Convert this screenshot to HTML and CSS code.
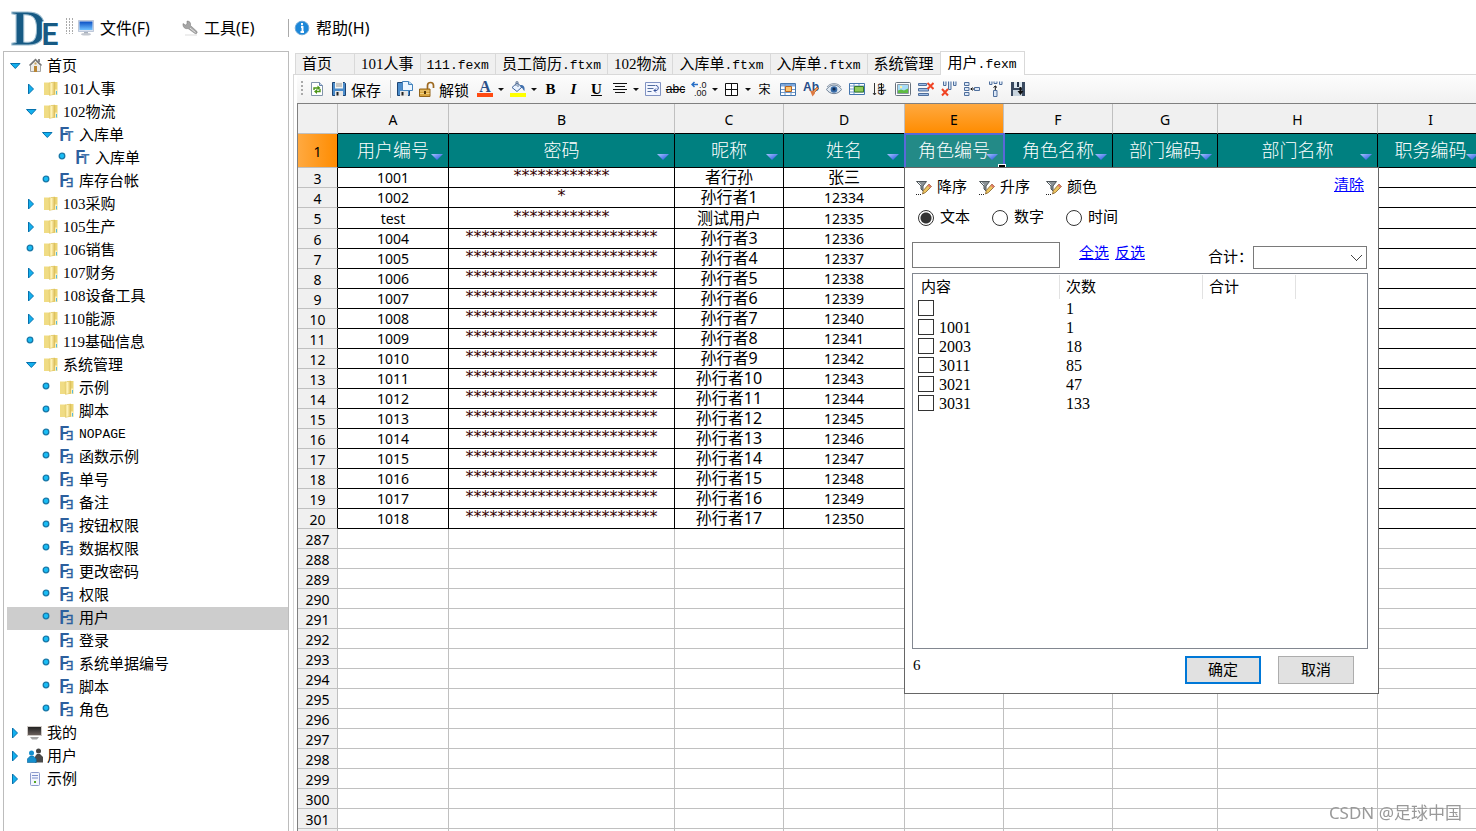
FILE: index.html
```html
<!DOCTYPE html>
<html lang="zh-CN">
<head>
<meta charset="utf-8">
<title>用户.fexm</title>
<link rel="stylesheet" href="styles.css">
</head>
<body>
<svg class="defs" aria-hidden="true">
  <defs>
    <linearGradient id="gold" x1="0" x2="1" y1="0" y2="0"><stop offset="0" stop-color="#ecd575"/><stop offset=".4" stop-color="#fff3b8"/><stop offset="1" stop-color="#d9b94f"/></linearGradient>
    <linearGradient id="blue" x1="0" x2="0" y1="0" y2="1"><stop offset="0" stop-color="#0a4fc4"/><stop offset="1" stop-color="#6fc0ff"/></linearGradient>
    <linearGradient id="flag" x1="0" x2="1" y1="0" y2="1"><stop offset="0" stop-color="#a8c4ff"/><stop offset="1" stop-color="#1c50dc"/></linearGradient>
    <linearGradient id="dark" x1="0" x2="0" y1="0" y2="1"><stop offset="0" stop-color="#222"/><stop offset="1" stop-color="#6a605c"/></linearGradient>
  </defs>
  <symbol id="open" viewBox="0 0 16 16"><path d="M3.500 5.500h9.500L8.300 10.500z" fill="#12b0ee" stroke="#0672ae"/></symbol>
  <symbol id="closed" viewBox="0 0 16 16"><path d="M5.500 3v10l5-5z" fill="#12b0ee" stroke="#0672ae"/></symbol>
  <symbol id="leaf" viewBox="0 0 16 16"><circle cx="7" cy="6" r="2.800" fill="#19bdf5" stroke="#1878a8" stroke-width="1.300"/></symbol>
  <symbol id="home" viewBox="0 0 16 16"><path d="M3.500 7.500v6h10v-6l-5-5z" fill="#ececea" stroke="#a5a5a3"/><path d="M2.500 7.500l6-6 6 6" fill="none" stroke="#777" stroke-width="1.500"/><path d="M11 1h2v3h-2z" fill="#888"/><path d="M7 8h3v6H7z" fill="#b98532"/><path d="M7.500 4.500h2v2h-2z" fill="#caa45c"/></symbol>
  <symbol id="folder" viewBox="0 0 16 16"><path d="M8 1h6.500v13H7z" fill="#ecd675"/><path d="M1 1.500h6V14H1z" fill="#f0dc84"/><path d="M6 2l6-1v12l-5.500 1.500z" fill="url(#gold)" stroke="#dcc260" stroke-width=".5"/><path d="M12 8.500h3V14h-3z" fill="#f9efbd"/><path d="M13.500 10v3.500" stroke="#58b8dc"/></symbol>
  <symbol id="ft" viewBox="0 0 16 16"><text x="0" y="14" font-family="Lato" font-size="18" font-weight="700" fill="#2c5f9e">F</text><text x="6" y="14" font-family="Lato" font-size="14" font-weight="700" fill="#4374ac">T</text></symbol>
  <symbol id="f3" viewBox="0 0 16 16"><text x="0" y="14" font-family="Lato" font-size="18" font-weight="700" fill="#2c5f9e">F</text><text x="7" y="14" font-family="DejaVu Sans" font-size="12" font-weight="400" fill="#2c5f9e" stroke="#2c5f9e" stroke-width=".4">Ǝ</text></symbol>
  <symbol id="tv" viewBox="0 0 16 16"><path d="M0 1h15v10H0z" fill="#cfcac6"/><path d="M1 2h13v8H1z" fill="url(#dark)"/><path d="M3 12h9l-2 2.500H5z" fill="#a5a5a5"/></symbol>
  <symbol id="people" viewBox="0 0 16 16"><circle cx="11.500" cy="3" r="2.500" fill="#444"/><path d="M8 14.500V8.500L10 6h3l3 3v5.500z" fill="#4a4a4a"/><circle cx="4.500" cy="5" r="2.500" fill="#148fce"/><path d="M.300 14.500V11l3-3h3l3 3v3.500z" fill="#148fce" stroke="#0a5f94" stroke-width=".6"/></symbol>
  <symbol id="sheet" viewBox="0 0 16 16"><rect x="3.500" y="1.500" width="9" height="13" rx="1" fill="#f2f5fd" stroke="#8d9ccc"/><path d="M5 4.500h6M5 7h6" stroke="#7b8fca"/><path d="M7 10h2v2H7z" fill="#52a522"/></symbol>
  <symbol id="monitor" viewBox="0 0 16 16"><path d="M.500.500h15v11H.500z" fill="#dbe3ef" stroke="#a9b6cc" stroke-width=".7"/><path d="M1.500 1.500h13v8.500h-13z" fill="url(#blue)"/><path d="M6 12h4v2H6z" fill="#a9b1bd"/><ellipse cx="8" cy="14.300" rx="5" ry="1.200" fill="#c3c8d0"/></symbol>
  <symbol id="wrench" viewBox="0 0 16 16"><path d="M1 3.500L3.500 5 5 4V1c3 0 4 2 3.500 4.500L15 11.500c.8 2-1.200 2.500-2 2L6 8.500C3 9.500.500 7 1 3.500z" fill="#a5a5a5" stroke="#777" stroke-width=".5"/><path d="M8 8l5.500 4.500" stroke="#e5e5e5"/><path d="M3 15h12" stroke="#ddd"/></symbol>
  <symbol id="info" viewBox="0 0 16 16"><circle cx="8" cy="8" r="6.800" fill="#1c87d8" stroke="#6aa7d8"/><path d="M8 3v2.200M7 7h1.500v4.500M6.500 12H10" stroke="#fff" stroke-width="1.900" fill="none"/></symbol>
  <symbol id="refresh" viewBox="0 0 16 16"><path d="M2.500 1.500h8l3 3v10h-11z" fill="#fff" stroke="#8294ab"/><path d="M10.500 1.500v3h3" fill="#c6d5ea" stroke="#6782ab"/><path d="M5 9V7h4.500M11 8v2.500H7" fill="none" stroke="#4b9617" stroke-width="1.400"/><path d="M8.500 4.500l3 2.500-3 2.200M8 8L5 10.500 8 13z" fill="#4b9617"/></symbol>
  <symbol id="save" viewBox="0 0 16 16"><path d="M1.500 1.500h12l1 1v12h-13z" fill="#4b8ccb" stroke="#1d4574"/><path d="M4 1h8v6.500H4z" fill="#f4f4f0"/><path d="M5 3h6M5 5h6" stroke="#999"/><path d="M4 10h8v5H4z" fill="#e6e6e6"/><path d="M5.500 11h2v3.500h-2z" fill="#222"/></symbol>
  <symbol id="saveas" viewBox="0 0 16 16"><path d="M.500 1.500h12v13H.500z" fill="#4b8ccb" stroke="#1d4574"/><path d="M3 10h8v5H3z" fill="#e6e6e6"/><path d="M4.500 11h2v3.500h-2z" fill="#222"/><path d="M5.500.500h6l4 3v6h-10z" fill="#edf6ff" stroke="#4382bb"/><path d="M11.500.500v3h4" fill="#b4d7f4" stroke="#4382bb"/></symbol>
  <symbol id="lock" viewBox="0 0 16 16"><path d="M8.500 8V4.500c0-4 6-4 6 0V7" fill="none" stroke="#9d681f" stroke-width="1.700"/><path d="M.500 8h10.500v7.500H.500z" fill="#d9a640" stroke="#94651b"/><path d="M1 10h9.500M1 12.500h9.500" stroke="#f3d385"/><path d="M5 10h2v3H5z" fill="#553807"/></symbol>
  <symbol id="fill" viewBox="0 0 16 16"><path d="M2 6.500L7 2l5 4-5 4.500z" fill="#eaf3ff" stroke="#42669b"/><path d="M6 5V.800h2V6" fill="none" stroke="#647a98"/><path d="M10 4c4-.5 5 2 4.500 6-2-1-1-3-4-4z" fill="#4271ae"/><path d="M0 12h16v4H0z" fill="#ff0"/></symbol>
  <symbol id="align" viewBox="0 0 16 16"><path d="M1 2.500h14M3 5.500h10M1 8.500h14M3 11.500h10" stroke="#111"/></symbol>
  <symbol id="wrap" viewBox="0 0 16 16"><path d="M.500 1.500h15v13H.500z" fill="#f3f6ff" stroke="#8193c2"/><path d="M2.500 4.500h8M2.500 7.500h6M2.500 10.500h4" stroke="#526e9e"/><path d="M11 4.500c3 0 3 5 0 5H9M11 7.500l-2 2 2 2" fill="none" stroke="#334f99"/></symbol>
  <symbol id="decimal" viewBox="0 0 16 16"><path d="M7 3.500H1M3.500 1L1 3.500 3.500 6" fill="none" stroke="#266ec6" stroke-width="1.500"/><text x="8" y="7" font-family="Liberation Sans" font-size="9" fill="#111">.0</text><text x="3" y="15" font-family="Liberation Sans" font-size="9" fill="#111">.00</text></symbol>
  <symbol id="borders" viewBox="0 0 16 16"><path d="M1.500 2.500h12v12h-12zM7.500 2.500v12M1.500 8.500h12" fill="#fff" stroke="#111"/></symbol>
  <symbol id="cells" viewBox="0 0 16 16"><path d="M.500 2.500h15v12H.500z" fill="#fff" stroke="#4476ae"/><path d="M1 3h14v2.500H1z" fill="#81a9dc"/><path d="M1 8.500h14M1 11.500h14M5 3v11M11 3v11" stroke="#6f9acb"/><path d="M5.500 5.500h6v5h-6z" fill="#ffc36b" stroke="#b66420"/></symbol>
  <symbol id="format" viewBox="0 0 16 16"><text x="0" y="10" font-family="Liberation Sans" font-size="12" font-weight="700" fill="#274d89">Ab</text><path d="M14 6l1.500 1.500-5 5L9 11z" fill="#ed9955" stroke="#9d471b" stroke-width=".6"/><path d="M7 9.500l4 1 1 2L9.500 15.500z" fill="#dd7a42"/></symbol>
  <symbol id="eye" viewBox="0 0 16 16"><path d="M.500 8.500C4 2.500 12 2.500 15.500 8.500 12 14 4 14 .500 8.500z" fill="#dfe8f1" stroke="#6f8197"/><circle cx="8" cy="8.500" r="3.300" fill="#376ba8"/><circle cx="8" cy="8" r="1.600" fill="#122b50"/><path d="M1 6C4 1.500 12 1.500 15 6" fill="none" stroke="#8b9aac"/></symbol>
  <symbol id="merge" viewBox="0 0 16 16"><path d="M.500 2.500h15v11H.500z" fill="#fff" stroke="#4476ae"/><path d="M1 5h14M1 8h4M1 11h14M5 3v10M10 3v2" stroke="#6f9acb"/><path d="M5.500 5.500h9v5.500h-9z" fill="#8ecb58" stroke="#397b29"/></symbol>
  <symbol id="vertical" viewBox="0 0 16 16"><path d="M2.500 2v12M1 12l1.500 2L4 12" fill="none" stroke="#333"/><text transform="translate(6 2) rotate(90)" font-family="Liberation Sans" font-size="11" fill="#111">ab</text><path d="M9.500 2v12" stroke="#111"/></symbol>
  <symbol id="picture" viewBox="0 0 16 16"><rect x=".5" y="1.500" width="15" height="13" rx="1" fill="#fff" stroke="#66717c"/><path d="M2.500 3.500h11v9h-11z" fill="#a5dcf7" stroke="#8c98a2"/><path d="M3 12V9.500l3-1 3 1 4-2V12z" fill="#5fbc43"/><circle cx="6" cy="6" r="1.200" fill="#fff2a0"/></symbol>
  <symbol id="delrow" viewBox="0 0 16 16"><path d="M.500 2.500h8v2h-8zM.500 7.500h10v2.500h-10zM.500 12.500h10v2h-10z" fill="#9fbce4" stroke="#4f6f9c"/><path d="M9.500 2l6 6M15.500 2l-6 6" stroke="#f04425" stroke-width="2"/></symbol>
  <symbol id="delcol" viewBox="0 0 16 16"><path d="M2.500.500v4h2.500v-4M7.500.500v8h2.500v-8M12.500.500v4H15v-4" fill="#d2e1f3" stroke="#4f6f9c"/><path d="M1 8l6 6.500M7 8l-6 6.500" stroke="#f04425" stroke-width="2"/></symbol>
  <symbol id="insrow" viewBox="0 0 16 16"><path d="M.500 1.500h4.500v3H.500zM.500 6.500h4.500v3H.500zM.500 11.500h4.500v3H.500zM10.500 6.500h5v3h-5z" fill="#dce7f6" stroke="#4f6f9c"/><path d="M6.500 8h3.500M8.500 6.500L7 8l1.500 1.500" fill="none" stroke="#111"/></symbol>
  <symbol id="inscol" viewBox="0 0 16 16"><path d="M2.500.500v3h2.500v-3M7 .500v2h3v-2M12.500.500v3H15v-3M6.500 9.500h3.500v6H6.500z" fill="#dce7f6" stroke="#4f6f9c"/><path d="M8.300 9V5M6.500 6.500L8.300 5l1.700 1.500" fill="none" stroke="#111"/></symbol>
  <symbol id="export" viewBox="0 0 16 16"><path d="M1 1h14v14H1z" fill="#3a4a60"/><path d="M4 1h8v6H4z" fill="#dce7ef"/><path d="M7 1h2v5H7z" fill="#28374c"/><path d="M3 9h9v6H3z" fill="#c8d4de"/><path d="M10.500 6v5" stroke="#111" stroke-width="2"/><path d="M7.500 10h6l-3 4z" fill="#111"/></symbol>
  <symbol id="funnel" viewBox="0 0 16 16"><path d="M.500 1.500h10L7 6v5l-2-2V6z" fill="#8b9296" stroke="#50575b"/><path d="M2 2l3 3" stroke="#e6edf0"/><path d="M13 4l2.500 2.500-6 6L6.500 14l.8-3.500z" fill="#edc45e" stroke="#836029" stroke-width=".8"/><path d="M13 4l2.500 2.500-1.500 1.500-2.500-2.500z" fill="#df7b6b"/><path d="M0 14.500h6" stroke="#222" stroke-dasharray="1 1"/></symbol>
  <symbol id="tri" viewBox="0 0 12 8"><path d="M0 1h12L6 7z" fill="url(#flag)"/></symbol>
</svg>

<div class="app">
<header class="menubar">
  <svg class="logo" viewBox="0 0 50 44" role="img" aria-label="DE"><text x="0" y="40" class="logo-d">D</text><text x="30" y="40" class="logo-e">E</text></svg>
  <span class="menu-grip"></span>
  <nav class="menu">
    <button class="menu-item file"><svg class="icon"><use href="#monitor"/></svg>文件(F)</button>
    <button class="menu-item tools"><svg class="icon"><use href="#wrench"/></svg>工具(E)</button>
    <button class="menu-item help"><svg class="icon"><use href="#info"/></svg>帮助(H)</button>
  </nav>
</header>

<div class="workspace">
<aside class="sidebar">
<ul class="tree">
  <li class="node"><svg class="icon"><use href="#open"/></svg><svg class="icon"><use href="#home"/></svg>首页</li>
  <li class="node l1"><svg class="icon"><use href="#closed"/></svg><svg class="icon"><use href="#folder"/></svg>101人事</li>
  <li class="node l1"><svg class="icon"><use href="#open"/></svg><svg class="icon"><use href="#folder"/></svg>102物流</li>
  <li class="node l2"><svg class="icon"><use href="#open"/></svg><svg class="icon"><use href="#ft"/></svg>入库单</li>
  <li class="node l3"><svg class="icon"><use href="#leaf"/></svg><svg class="icon"><use href="#ft"/></svg>入库单</li>
  <li class="node l2"><svg class="icon"><use href="#leaf"/></svg><svg class="icon"><use href="#f3"/></svg>库存台帐</li>
  <li class="node l1"><svg class="icon"><use href="#closed"/></svg><svg class="icon"><use href="#folder"/></svg>103采购</li>
  <li class="node l1"><svg class="icon"><use href="#closed"/></svg><svg class="icon"><use href="#folder"/></svg>105生产</li>
  <li class="node l1"><svg class="icon"><use href="#leaf"/></svg><svg class="icon"><use href="#folder"/></svg>106销售</li>
  <li class="node l1"><svg class="icon"><use href="#closed"/></svg><svg class="icon"><use href="#folder"/></svg>107财务</li>
  <li class="node l1"><svg class="icon"><use href="#closed"/></svg><svg class="icon"><use href="#folder"/></svg>108设备工具</li>
  <li class="node l1"><svg class="icon"><use href="#closed"/></svg><svg class="icon"><use href="#folder"/></svg>110能源</li>
  <li class="node l1"><svg class="icon"><use href="#leaf"/></svg><svg class="icon"><use href="#folder"/></svg>119基础信息</li>
  <li class="node l1"><svg class="icon"><use href="#open"/></svg><svg class="icon"><use href="#folder"/></svg>系统管理</li>
  <li class="node l2"><svg class="icon"><use href="#leaf"/></svg><svg class="icon"><use href="#folder"/></svg>示例</li>
  <li class="node l2"><svg class="icon"><use href="#leaf"/></svg><svg class="icon"><use href="#folder"/></svg>脚本</li>
  <li class="node l2"><svg class="icon"><use href="#leaf"/></svg><svg class="icon"><use href="#f3"/></svg><span class="mono">NOPAGE</span></li>
  <li class="node l2"><svg class="icon"><use href="#leaf"/></svg><svg class="icon"><use href="#f3"/></svg>函数示例</li>
  <li class="node l2"><svg class="icon"><use href="#leaf"/></svg><svg class="icon"><use href="#f3"/></svg>单号</li>
  <li class="node l2"><svg class="icon"><use href="#leaf"/></svg><svg class="icon"><use href="#f3"/></svg>备注</li>
  <li class="node l2"><svg class="icon"><use href="#leaf"/></svg><svg class="icon"><use href="#f3"/></svg>按钮权限</li>
  <li class="node l2"><svg class="icon"><use href="#leaf"/></svg><svg class="icon"><use href="#f3"/></svg>数据权限</li>
  <li class="node l2"><svg class="icon"><use href="#leaf"/></svg><svg class="icon"><use href="#f3"/></svg>更改密码</li>
  <li class="node l2"><svg class="icon"><use href="#leaf"/></svg><svg class="icon"><use href="#f3"/></svg>权限</li>
  <li class="node l2 selected"><svg class="icon"><use href="#leaf"/></svg><svg class="icon"><use href="#f3"/></svg>用户</li>
  <li class="node l2"><svg class="icon"><use href="#leaf"/></svg><svg class="icon"><use href="#f3"/></svg>登录</li>
  <li class="node l2"><svg class="icon"><use href="#leaf"/></svg><svg class="icon"><use href="#f3"/></svg>系统单据编号</li>
  <li class="node l2"><svg class="icon"><use href="#leaf"/></svg><svg class="icon"><use href="#f3"/></svg>脚本</li>
  <li class="node l2"><svg class="icon"><use href="#leaf"/></svg><svg class="icon"><use href="#f3"/></svg>角色</li>
  <li class="node"><svg class="icon"><use href="#closed"/></svg><svg class="icon"><use href="#tv"/></svg>我的</li>
  <li class="node"><svg class="icon"><use href="#closed"/></svg><svg class="icon"><use href="#people"/></svg>用户</li>
  <li class="node"><svg class="icon"><use href="#closed"/></svg><svg class="icon"><use href="#sheet"/></svg>示例</li>
</ul>
</aside>

<main class="main">
<div class="tabs" role="tablist">
  <button class="tab first" role="tab">首页</button>
  <button class="tab" role="tab">101人事</button>
  <button class="tab" role="tab"><span class="mono">111.fexm</span></button>
  <button class="tab" role="tab">员工简历<span class="mono">.ftxm</span></button>
  <button class="tab" role="tab">102物流</button>
  <button class="tab" role="tab">入库单<span class="mono">.ftxm</span></button>
  <button class="tab" role="tab">入库单<span class="mono">.ftxm</span></button>
  <button class="tab" role="tab">系统管理</button>
  <button class="tab active" role="tab" aria-selected="true">用户<span class="mono">.fexm</span></button>
</div>

<div class="panel">
<div class="toolbar" role="toolbar">
  <span class="grip"></span>
  <button class="tool" aria-label="刷新"><svg class="icon"><use href="#refresh"/></svg></button>
  <button class="tool labelled"><svg class="icon"><use href="#save"/></svg>保存</button>
  <span class="divider"></span>
  <button class="tool" aria-label="另存为"><svg class="icon"><use href="#saveas"/></svg></button>
  <button class="tool labelled"><svg class="icon"><use href="#lock"/></svg>解锁</button>
  <button class="tool glyph color">A</button><button class="caret" aria-label="更多"></button>
  <button class="tool" aria-label="填充"><svg class="icon"><use href="#fill"/></svg></button><button class="caret" aria-label="更多"></button>
  <button class="tool glyph">B</button>
  <button class="tool glyph italic">I</button>
  <button class="tool glyph under">U</button>
  <button class="tool" aria-label="对齐"><svg class="icon"><use href="#align"/></svg></button><button class="caret" aria-label="更多"></button>
  <button class="tool" aria-label="换行"><svg class="icon"><use href="#wrap"/></svg></button>
  <button class="tool strike">abc</button>
  <button class="tool" aria-label="小数"><svg class="icon"><use href="#decimal"/></svg></button><button class="caret" aria-label="更多"></button>
  <button class="tool" aria-label="边框"><svg class="icon"><use href="#borders"/></svg></button><button class="caret" aria-label="更多"></button>
  <button class="tool song">宋</button>
  <button class="tool" aria-label="单元格"><svg class="icon"><use href="#cells"/></svg></button>
  <button class="tool" aria-label="格式"><svg class="icon"><use href="#format"/></svg></button>
  <button class="tool" aria-label="预览"><svg class="icon"><use href="#eye"/></svg></button>
  <button class="tool" aria-label="合并"><svg class="icon"><use href="#merge"/></svg></button>
  <button class="tool" aria-label="竖排"><svg class="icon"><use href="#vertical"/></svg></button>
  <button class="tool" aria-label="图片"><svg class="icon"><use href="#picture"/></svg></button>
  <button class="tool" aria-label="删除行"><svg class="icon"><use href="#delrow"/></svg></button>
  <button class="tool" aria-label="删除列"><svg class="icon"><use href="#delcol"/></svg></button>
  <button class="tool" aria-label="插入行"><svg class="icon"><use href="#insrow"/></svg></button>
  <button class="tool" aria-label="插入列"><svg class="icon"><use href="#inscol"/></svg></button>
  <button class="tool" aria-label="导出"><svg class="icon"><use href="#export"/></svg></button>
</div>

<div class="sheet">
<table class="grid">
<colgroup><col class="c-row"><col class="c-a"><col class="c-b"><col class="c-c"><col class="c-d"><col class="c-e"><col class="c-f"><col class="c-g"><col class="c-h"><col class="c-i"></colgroup>
<thead>
<tr><th></th><th>A</th><th>B</th><th>C</th><th>D</th><th class="hot-col">E</th><th>F</th><th>G</th><th>H</th><th>I</th></tr>
</thead>
<tbody class="titles">
<tr><th class="hot-row">1</th><td>用户编号<svg class="tri"><use href="#tri"/></svg></td><td>密码<svg class="tri"><use href="#tri"/></svg></td><td>昵称<svg class="tri"><use href="#tri"/></svg></td><td>姓名<svg class="tri"><use href="#tri"/></svg></td><td class="current">角色编号<svg class="tri"><use href="#tri"/></svg></td><td>角色名称<svg class="tri"><use href="#tri"/></svg></td><td>部门编码<svg class="tri"><use href="#tri"/></svg></td><td>部门名称<svg class="tri"><use href="#tri"/></svg></td><td>职务编码<svg class="tri"><use href="#tri"/></svg></td></tr>
</tbody>
<tbody class="data">
<tr><th>3</th><td>1001</td><td>************</td><td>者行孙</td><td class="cn">张三</td><td></td><td></td><td></td><td></td><td></td></tr>
<tr><th>4</th><td>1002</td><td>*</td><td>孙行者1</td><td>12334</td><td></td><td></td><td></td><td></td><td></td></tr>
<tr class="tall"><th>5</th><td>test</td><td>************</td><td>测试用户</td><td>12335</td><td></td><td></td><td></td><td></td><td></td></tr>
<tr><th>6</th><td>1004</td><td>************************</td><td>孙行者3</td><td>12336</td><td></td><td></td><td></td><td></td><td></td></tr>
<tr><th>7</th><td>1005</td><td>************************</td><td>孙行者4</td><td>12337</td><td></td><td></td><td></td><td></td><td></td></tr>
<tr><th>8</th><td>1006</td><td>************************</td><td>孙行者5</td><td>12338</td><td></td><td></td><td></td><td></td><td></td></tr>
<tr><th>9</th><td>1007</td><td>************************</td><td>孙行者6</td><td>12339</td><td></td><td></td><td></td><td></td><td></td></tr>
<tr><th>10</th><td>1008</td><td>************************</td><td>孙行者7</td><td>12340</td><td></td><td></td><td></td><td></td><td></td></tr>
<tr><th>11</th><td>1009</td><td>************************</td><td>孙行者8</td><td>12341</td><td></td><td></td><td></td><td></td><td></td></tr>
<tr><th>12</th><td>1010</td><td>************************</td><td>孙行者9</td><td>12342</td><td></td><td></td><td></td><td></td><td></td></tr>
<tr><th>13</th><td>1011</td><td>************************</td><td>孙行者10</td><td>12343</td><td></td><td></td><td></td><td></td><td></td></tr>
<tr><th>14</th><td>1012</td><td>************************</td><td>孙行者11</td><td>12344</td><td></td><td></td><td></td><td></td><td></td></tr>
<tr><th>15</th><td>1013</td><td>************************</td><td>孙行者12</td><td>12345</td><td></td><td></td><td></td><td></td><td></td></tr>
<tr><th>16</th><td>1014</td><td>************************</td><td>孙行者13</td><td>12346</td><td></td><td></td><td></td><td></td><td></td></tr>
<tr><th>17</th><td>1015</td><td>************************</td><td>孙行者14</td><td>12347</td><td></td><td></td><td></td><td></td><td></td></tr>
<tr><th>18</th><td>1016</td><td>************************</td><td>孙行者15</td><td>12348</td><td></td><td></td><td></td><td></td><td></td></tr>
<tr><th>19</th><td>1017</td><td>************************</td><td>孙行者16</td><td>12349</td><td></td><td></td><td></td><td></td><td></td></tr>
<tr><th>20</th><td>1018</td><td>************************</td><td>孙行者17</td><td>12350</td><td></td><td></td><td></td><td></td><td></td></tr>
</tbody>
<tbody class="blank">
<tr><th>287</th><td></td><td></td><td></td><td></td><td></td><td></td><td></td><td></td><td></td></tr>
<tr><th>288</th><td></td><td></td><td></td><td></td><td></td><td></td><td></td><td></td><td></td></tr>
<tr><th>289</th><td></td><td></td><td></td><td></td><td></td><td></td><td></td><td></td><td></td></tr>
<tr><th>290</th><td></td><td></td><td></td><td></td><td></td><td></td><td></td><td></td><td></td></tr>
<tr><th>291</th><td></td><td></td><td></td><td></td><td></td><td></td><td></td><td></td><td></td></tr>
<tr><th>292</th><td></td><td></td><td></td><td></td><td></td><td></td><td></td><td></td><td></td></tr>
<tr><th>293</th><td></td><td></td><td></td><td></td><td></td><td></td><td></td><td></td><td></td></tr>
<tr><th>294</th><td></td><td></td><td></td><td></td><td></td><td></td><td></td><td></td><td></td></tr>
<tr><th>295</th><td></td><td></td><td></td><td></td><td></td><td></td><td></td><td></td><td></td></tr>
<tr><th>296</th><td></td><td></td><td></td><td></td><td></td><td></td><td></td><td></td><td></td></tr>
<tr><th>297</th><td></td><td></td><td></td><td></td><td></td><td></td><td></td><td></td><td></td></tr>
<tr><th>298</th><td></td><td></td><td></td><td></td><td></td><td></td><td></td><td></td><td></td></tr>
<tr><th>299</th><td></td><td></td><td></td><td></td><td></td><td></td><td></td><td></td><td></td></tr>
<tr><th>300</th><td></td><td></td><td></td><td></td><td></td><td></td><td></td><td></td><td></td></tr>
<tr><th>301</th><td></td><td></td><td></td><td></td><td></td><td></td><td></td><td></td><td></td></tr>
<tr><th></th><td></td><td></td><td></td><td></td><td></td><td></td><td></td><td></td><td></td></tr>
</tbody>
</table>

<section class="filter" role="dialog" aria-label="筛选">
  <div class="sorts">
    <button class="sort"><svg class="icon"><use href="#funnel"/></svg>降序</button>
    <button class="sort"><svg class="icon"><use href="#funnel"/></svg>升序</button>
    <button class="sort wide"><svg class="icon"><use href="#funnel"/></svg>颜色</button>
    <a class="link clear" href="#">清除</a>
  </div>
  <div class="kinds">
    <label class="kind"><input type="radio" name="kind" checked>文本</label>
    <label class="kind"><input type="radio" name="kind">数字</label>
    <label class="kind"><input type="radio" name="kind">时间</label>
  </div>
  <div class="search">
    <input class="search-box" type="text" aria-label="查找">
    <a class="link" href="#">全选</a>
    <a class="link" href="#">反选</a>
    <div class="sum">
      <label for="total">合计：</label>
      <select class="total" id="total"><option></option></select>
    </div>
  </div>
  <div class="listbox">
    <table class="values">
      <colgroup><col class="v-name"><col class="v-count"><col class="v-sum"><col></colgroup>
      <thead><tr><th>内容</th><th>次数</th><th>合计</th><th></th></tr></thead>
      <tbody>
        <tr><td><label class="value"><input type="checkbox" aria-label="空"></label></td><td>1</td><td></td><td></td></tr>
        <tr><td><label class="value"><input type="checkbox">1001</label></td><td>1</td><td></td><td></td></tr>
        <tr><td><label class="value"><input type="checkbox">2003</label></td><td>18</td><td></td><td></td></tr>
        <tr><td><label class="value"><input type="checkbox">3011</label></td><td>85</td><td></td><td></td></tr>
        <tr><td><label class="value"><input type="checkbox">3021</label></td><td>47</td><td></td><td></td></tr>
        <tr><td><label class="value"><input type="checkbox">3031</label></td><td>133</td><td></td><td></td></tr>
      </tbody>
    </table>
  </div>
  <div class="actions">
    <span class="count">6</span>
    <button class="btn primary">确定</button>
    <button class="btn">取消</button>
  </div>
</section>
</div>
</div>
</main>
</div>
</div>
<div class="watermark">CSDN @足球中国</div>
</body>
</html>
```
FILE: styles.css
```css
* { box-sizing: border-box; }
body {
  margin: 0;
  background: #fff;
  color: #000;
  font: 15px/23px "Liberation Serif", "Noto Sans CJK SC", sans-serif;
}
button, input, select { font: inherit; color: inherit; }
button { margin: 0; padding: 0; border: 0; background: none; white-space: nowrap; }
.defs { position: absolute; width: 0; height: 0; visibility: hidden; }
.icon { width: 16px; height: 16px; flex: none; }
.mono { font-family: "Liberation Mono", monospace; font-size: 13px; }

.app { display: flex; flex-direction: column; height: 100vh; overflow: hidden; }

/* menu bar */
.menubar { display: flex; align-items: center; flex: none; height: 51px; padding: 0 0 0 11px; }
.logo { width: 50px; height: 44px; margin-top: 2px; overflow: visible; }
.logo-d { font: 700 50px "Liberation Serif", serif; fill: #175a84; stroke: #9dbdd0; stroke-width: 1px; }
.logo-e { font: 700 31px Lato, sans-serif; fill: #175a84; stroke: #fff; stroke-width: 3px; paint-order: stroke; }
.menu-grip {
  width: 8px; height: 17px; margin: 0 4px 0 5px;
  background: repeating-linear-gradient(#fff 0 1px, transparent 1px 3px), repeating-linear-gradient(90deg, #aaa 0 1px, #fff 1px 3px);
}
.menu { display: flex; align-items: center; margin-top: 4px; font: 16px/22px "Noto Sans", "Noto Sans CJK SC", sans-serif; }
.menu-item { display: flex; align-items: center; gap: 6px; }
.menu-item.file { width: 104px; }
.menu-item.tools { width: 106px; }
.menu-item.help { height: 18px; padding-left: 5px; border-left: 1px solid #aaa; }

/* tree */
.workspace { display: flex; flex: 1; min-height: 0; }
.sidebar { flex: none; width: 286px; margin-left: 3px; padding: 3px 0 0 3px; border: 1px solid #bcbcbc; border-bottom: 0; overflow: hidden; }
.tree { margin: 0; padding: 0; list-style: none; }
.node { display: flex; align-items: center; gap: 4px; height: 23px; }
.node .icon { margin-bottom: 1px; }
.l1 { padding-left: 16px; }
.l2 { padding-left: 32px; }
.l3 { padding-left: 48px; }
.selected { background: #cdcdcd; }

/* tabs */
.main { display: flex; flex-direction: column; flex: 1; min-width: 0; margin-left: 4px; }
.tabs { display: flex; align-items: flex-end; flex: none; height: 23px; padding-left: 2px; }
.tab { height: 21px; padding: 0 6px; border: 1px solid #d9d9d9; border-width: 1px 0 0 1px; background: #f0f0f0; line-height: 21px; }
.tab.first { width: 59px; text-align: left; }
.tab.active { position: relative; height: 24px; margin-bottom: -1px; padding: 0 7px; border-width: 1px 1px 0; background: #fff; }
.panel { display: flex; flex-direction: column; flex: 1; min-height: 0; padding-left: 3px; border: 1px solid #d9d9d9; border-width: 1px 0 0 1px; }

/* toolbar */
.toolbar { display: flex; align-items: center; flex: none; height: 28px; padding: 0 0 0 4px; background: linear-gradient(#fdfdfd, #f1f1f1); }
.grip { width: 2px; height: 16px; margin-right: 2px; background: repeating-linear-gradient(#aaa 0 2px, transparent 2px 4px); }
.tool { display: flex; align-items: center; justify-content: center; flex: none; width: 23px; height: 23px; }
.tool.labelled { gap: 4px; width: 56px; font-family: "Noto Sans CJK SC", sans-serif; }
.divider { width: 1px; height: 18px; margin: 0 2px 0 6px; background: #c4c4c4; }
.caret { flex: none; width: 10px; height: 23px; }
.caret::before { content: ""; display: block; width: 0; margin: 0 auto; border: 3px solid transparent; border-top-color: #111; border-bottom: 0; }
.glyph { font: 700 15px/16px "Liberation Serif", serif; }
.italic { font-style: italic; }
.under { text-decoration: underline; }
.color { width: 16px; height: 16px; margin: 0 3px 0 5px; border-bottom: 4px solid #ff4a12; color: #2b4f88; font-size: 16px; }
.strike { font: 12px/16px "Liberation Sans", sans-serif; text-decoration: line-through; }
.song { font: 12px/16px "Noto Sans CJK SC", sans-serif; }

/* spreadsheet */
.sheet { position: relative; flex: 1; min-height: 0; border: 1px solid #808080; border-width: 1px 0 0 1px; overflow: hidden; }
.grid { width: 1186px; table-layout: fixed; border-spacing: 0; font: 14px/19px "Noto Sans", "Noto Sans CJK SC", sans-serif; text-align: center; }
.grid th, .grid td { height: 20px; padding: 0; border: 1px solid #c0c0c0; border-width: 0 1px 1px 0; white-space: nowrap; }
.grid th { padding-top: 1px; background: #f0f0f0; font-weight: 400; line-height: 17px; }
.c-row { width: 40px; }
.c-a { width: 111px; }
.c-b { width: 226px; }
.c-c { width: 109px; }
.c-d { width: 121px; }
.c-e { width: 99px; }
.c-f { width: 109px; }
.c-g { width: 105px; }
.c-h { width: 160px; }
.c-i { width: 106px; }
.grid thead th { height: 30px; }
.grid thead th + th { border-bottom-color: #000; }
.grid thead .hot-col { background: linear-gradient(#ffa940, #ff8c00); }
.titles th, .data th { border-right-color: #000; }
.titles .hot-row { background: linear-gradient(90deg, #ffa940, #ff8c00); }
.titles td { position: relative; height: 34px; border-color: #000; background: #008080; color: #fff; font-size: 18px; font-weight: 300; }
.tri { position: absolute; right: 5px; bottom: 6px; width: 12px; height: 8px; }
.titles .current { z-index: 1; background: #238a87; outline: 2px solid #5a68d8; outline-offset: -1px; }
.current::after { content: ""; position: absolute; right: -3px; bottom: -1px; width: 6px; height: 3px; background: #000; border: 1px solid #fff; border-bottom: 0; }
.data td { border-color: #000; }
.data td:nth-child(3) { height: 19px; padding-bottom: 3px; color: #300; font: 16px/16px "DejaVu Sans", sans-serif; }
.data td:nth-child(4), .data .cn { font-size: 16px; }
.data .tall td, .data .tall th { height: 21px; }

/* filter popup */
.filter { position: absolute; z-index: 2; top: 63px; left: 606px; display: flex; flex-direction: column; width: 475px; height: 527px; padding: 6px 10px 9px 7px; border: 1px solid #666; background: #fff; }
.link { color: #00f; text-decoration: underline; }
.sorts { display: flex; align-items: center; padding-left: 4px; }
.sort { display: flex; align-items: center; gap: 5px; margin-right: 12px; }
.sort.wide { margin-left: 4px; }
.clear { margin: 0 4px 4px auto; }
.kinds { display: flex; gap: 22px; margin: 5px 0 12px 6px; }
.kind { display: flex; align-items: center; gap: 6px; }
.kind input { appearance: none; width: 16px; height: 16px; margin: 0; border: 1px solid #333; border-radius: 50%; background: #fff; }
.kind input:checked { background: radial-gradient(#333 0 5px, #fff 6px); }
.search { display: flex; align-items: center; gap: 6px; height: 28px; }
.search .link { margin-bottom: 4px; }
.search-box { width: 148px; height: 26px; margin-right: 13px; padding: 0 4px; border: 1px solid #7a7a7a; }
.sum { display: flex; align-items: center; margin: 4px 1px 0 auto; }
.total {
  width: 114px; height: 23px; padding: 0 20px 0 4px; appearance: none; border: 1px solid #7a7a7a; border-radius: 0;
  background: linear-gradient(45deg, transparent 44%, #444 44% 56%, transparent 56%) 97px 8px / 6px 6px no-repeat, linear-gradient(-45deg, transparent 44%, #444 44% 56%, transparent 56%) 102px 8px / 6px 6px no-repeat #fff;
}
.listbox { flex: 1; min-height: 0; margin-top: 4px; padding-top: 1px; border: 1px solid #828790; }
.values { width: 100%; table-layout: fixed; border-spacing: 0; font-size: 16px; line-height: 19px; }
.v-name { width: 147px; }
.v-count { width: 143px; }
.v-sum { width: 93px; }
.values th { height: 24px; padding: 0 6px; border-right: 1px solid #e2e2e2; font-weight: 400; font-size: 15px; text-align: left; }
.values th:first-child { padding-left: 8px; }
.values th:last-child { border-right: 0; }
.values td { height: 19px; padding: 0 6px; }
.values td:first-child { padding: 0 5px; }
.value { display: flex; align-items: center; gap: 5px; height: 19px; }
.value input { appearance: none; width: 16px; height: 16px; margin: 0 0 1px; border: 1px solid #333; background: #fff; }
.actions { display: flex; align-items: flex-start; gap: 17px; padding: 7px 14px 0 1px; }
.count { margin: -2px auto 0 0; }
.btn { width: 76px; height: 28px; border: 1px solid #adadad; background: #e1e1e1; }
.btn.primary { border: 2px solid #0078d7; }

.watermark { position: fixed; right: 14px; bottom: 6px; color: #999; font: 17px/24px "Noto Sans", "Noto Sans CJK SC", sans-serif; }
```
